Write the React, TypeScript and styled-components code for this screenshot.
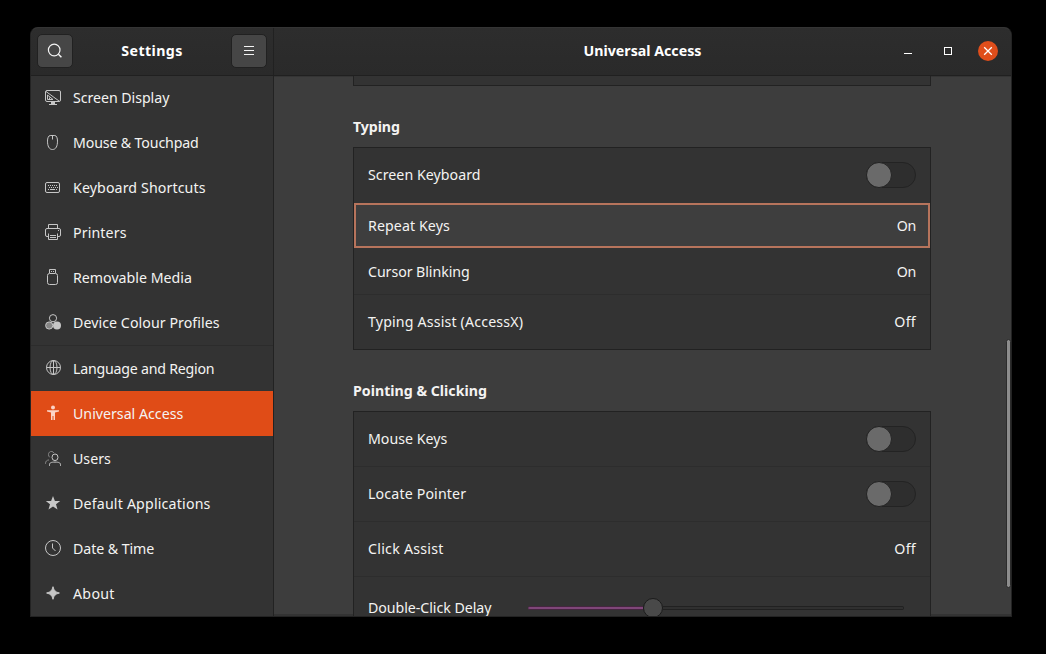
import React from "react";
import styled, { createGlobalStyle, css } from "styled-components";

const GlobalStyle = createGlobalStyle`
  html, body { margin: 0; background: #000; }
  *, *::before { box-sizing: border-box; }
  body {
    height: 654px;
    overflow: hidden;
    font-family: "Noto Sans", "Open Sans", sans-serif;
    font-size: 14.2px;
    line-height: 20px;
    color: #f4f3f2;
  }
`;

const Desktop = styled.div`
  height: 654px;
  padding: 27px 34px 37px 30px;
  background: #000;
`;

const Window = styled.div`
  height: 590px;
  display: flex;
  flex-direction: column;
  border: 1px solid #232323;
  border-top-color: #343434;
  border-radius: 8px 8px 0 0;
  background: #3d3d3d;
  overflow: hidden;
`;

const Header = styled.header`
  height: 48px;
  flex: none;
  display: flex;
  background: linear-gradient(#2d2d2d, #2a2a2a);
  border-bottom: 1px solid #202020;
  position: relative;
  z-index: 1;
`;

const HeaderLeft = styled.div`
  width: 243px;
  display: flex;
  align-items: center;
  justify-content: space-between;
  padding: 0 6px 2px;
  border-right: 1px solid #212121;
`;

const HeaderRight = styled.div`
  flex: 1;
  display: grid;
  grid-template-columns: 1fr auto 1fr;
  align-items: center;
  padding: 0 13px 2px;
`;

const Title = styled.h1<{ $track?: number }>`
  margin: 0;
  font-size: 14.2px;
  line-height: 20px;
  font-weight: 700;
  letter-spacing: ${(p) => p.$track ?? 0}px;
  color: #fff;
`;

const ToolButton = styled.button`
  width: 36px;
  height: 34px;
  padding: 0;
  display: grid;
  place-items: center;
  border: 1px solid #212121;
  border-radius: 5px;
  background: #464646;
  color: #f4f4f4;
`;

const WindowControls = styled.div`
  grid-column: 3;
  justify-self: end;
  display: flex;
  gap: 20px;
`;

const Control = styled.span<{ $close?: boolean }>`
  width: 20px;
  height: 20px;
  border-radius: 50%;
  color: #fff;
  background: ${(p) => (p.$close ? "#e04e1b" : "transparent")};
  svg { display: block; }
`;

const Body = styled.div`
  flex: 1;
  min-height: 0;
  display: flex;
`;

const Sidebar = styled.nav`
  width: 243px;
  flex: none;
  margin-top: -1px;
  background: #333;
  border-right: 1px solid #222;
  overflow: hidden;
`;

const NavItem = styled.div<{ $active?: boolean; $track: number; $separated?: boolean }>`
  height: 45px;
  display: flex;
  align-items: center;
  gap: 12px;
  padding: 0 14px;
  letter-spacing: ${(p) => p.$track}px;
  white-space: nowrap;
  ${(p) =>
    p.$separated &&
    css`
      height: 46px;
      border-top: 1px solid #2c2c2c;
    `}
  ${(p) => p.$active && css`background: #e04c17;`}
  svg {
    flex: none;
    margin-bottom: 1px;
    overflow: visible;
    color: ${(p) => (p.$active ? "#fbd3c6" : "#c6c6c6")};
  }
`;

const Content = styled.main`
  flex: 1;
  min-width: 0;
  display: flex;
  overflow: hidden;
  box-shadow: inset 0 1px 0 #343434, inset 0 -2px 0 #333;
`;

const Scroller = styled.div`
  flex: 1;
  padding: 0 75px 0 79px;
`;

const Section = styled.section`
  height: 264px;
`;

const SectionTitle = styled.h2<{ $track: number }>`
  margin: 0;
  height: 61px;
  padding-top: 31px;
  font-size: 14.2px;
  line-height: 20px;
  font-weight: 700;
  letter-spacing: ${(p) => p.$track}px;
`;

const Panel = styled.div`
  border: 1px solid #222;
  background: #333;
`;

const PreviousPanel = styled(Panel)`
  height: 10px;
  border-top: 0;
`;

const Row = styled.div<{ $height: number; $focused?: boolean; $divided?: boolean }>`
  height: ${(p) => p.$height}px;
  display: flex;
  align-items: center;
  justify-content: space-between;
  padding: 0 14px;
  ${(p) => p.$divided && css`border-bottom: 1px solid #2d2d2d;`}
  ${(p) =>
    p.$focused &&
    css`
      background: #3e3e3e;
      border: 2px solid #b7745c;
      padding: 0 12px;
    `}
`;

const KeyboardRow = styled(Row)`
  padding-bottom: 1px;
`;

const CursorRow = styled(Row)`
  padding-top: 1px;
`;

const Label = styled.span<{ $track?: number }>`
  letter-spacing: ${(p) => p.$track ?? 0}px;
  white-space: nowrap;
`;

const Toggle = styled.span`
  width: 50px;
  height: 26px;
  display: flex;
  border: 1px solid #232323;
  border-radius: 13px;
  background: #2e2e2e;
  &::before {
    content: "";
    flex: none;
    width: 26px;
    height: 26px;
    margin: -1px 0 0 -1px;
    border: 1px solid #242424;
    border-radius: 50%;
    background: #6a6a6a;
  }
`;

const SliderTrack = styled.div`
  width: 376px;
  height: 20px;
  margin-right: 12px;
  display: flex;
  align-items: center;
`;

const SliderFill = styled.i`
  width: 115px;
  height: 4px;
  background: #7f4679;
  border: solid #44263f;
  border-width: 1px 0;
  border-radius: 2px 0 0 2px;
`;

const SliderThumb = styled.i`
  width: 20px;
  height: 20px;
  border: 1px solid #1b1b1b;
  border-radius: 50%;
  background: #494949;
`;

const SliderRest = styled.i`
  flex: 1;
  height: 4px;
  border: 1px solid #212121;
  border-left: 0;
  border-radius: 0 2px 2px 0;
  background: #303030;
`;

const ScrollRail = styled.div`
  width: 5px;
  flex: none;
  padding-top: 263px;
`;

const ScrollThumb = styled.div`
  width: 5px;
  height: 249px;
  border: 1px solid #2c2c2c;
  border-radius: 3px;
  background: #8d8d8d;
`;

const Icon = ({ children }: { children: React.ReactNode }) => (
  <svg width="16" height="16" viewBox="0 0 16 16" fill="none" stroke="currentColor">
    {children}
  </svg>
);

const icons = {
  display: (
    <Icon>
      <rect x=".5" y="1.5" width="15" height="11" rx="1.5" />
      <path d="M1 2.5 14 12M2.5 6v4.5H8zM4.5 8.5v2" />
      <path d="M6 13h4v2h2v1H4v-1h2z" fill="currentColor" stroke="none" />
    </Icon>
  ),
  mouse: (
    <Icon>
      <path d="M5.200 1.500h4.600c1.800 0 2.700 2.800 2.700 5.600 0 4.900-1.500 8.400-5 8.400s-5-3.500-5-8.400C2.500 4.300 3.400 1.500 5.200 1.500zM7.500 1.500v4" />
    </Icon>
  ),
  keyboard: (
    <Icon>
      <rect x=".5" y="3.5" width="14" height="10" rx="1.5" />
      <path d="M3 6.500h10M4 8.500h9" strokeDasharray="1 1" />
      <path d="M3 10.500h1M5 10.500h5M11 10.500h1" />
    </Icon>
  ),
  printer: (
    <Icon>
      <path d="M3.5 4V.5h9V4M3 12.5H2A1.5 1.5 0 0 1 .5 11V6A1.5 1.5 0 0 1 2 4.5h12A1.5 1.5 0 0 1 15.5 6v5a1.5 1.5 0 0 1-1.5 1.5h-1M3.5 9.500v6h9v-6M5 11.500h6M5 13.500h6M13 6.500h1" />
    </Icon>
  ),
  usb: (
    <Icon>
      <path d="M4.5 4V.5h6V4M6 2.5h1M8 2.5h1" />
      <rect x="2.5" y="4.5" width="10" height="11" rx="2" />
    </Icon>
  ),
  colour: (
    <Icon>
      <circle cx="8" cy="4.2" r="3.6" />
      <circle cx="4.200" cy="11.500" r="3.6" fill="#858585" />
      <circle cx="12" cy="11.500" r="4" fill="currentColor" stroke="none" />
    </Icon>
  ),
  globe: (
    <Icon>
      <circle cx="8.5" cy="7.5" r="7" />
      <ellipse cx="8.5" cy="7.5" rx="3.5" ry="7" />
      <path d="M8.5.5v14M1.5 7.5h14" />
    </Icon>
  ),
  access: (
    <Icon>
      <g fill="currentColor" stroke="none">
        <circle cx="8" cy="2.600" r="2" />
        <path d="M2 5.300h12v1.200l-4 .9V15H8.500v-4h-1v4H6V7.400l-4-.9z" />
      </g>
    </Icon>
  ),
  users: (
    <Icon>
      <g transform="translate(0 .8)">
        <path d="M9 2.200C8 .5 5.800.2 4.500 1.300 3 2.500 3.200 5.200 4.700 6.500M.5 13c0-2.600 1.200-3.600 3.500-3.900" stroke="#858585" />
        <ellipse cx="10" cy="6.500" rx="3" ry="3.300" />
        <path d="M4.500 15v-1c0-2.100 1.600-2.700 5.500-2.700s5.500.6 5.500 2.700v1" />
      </g>
    </Icon>
  ),
  star: (
    <Icon>
      <path d="m8 1 1.900 5h5.300l-4.200 3.300 1.500 5.200L8 11.400l-4.500 3.100L5 9.300.8 6h5.300z" fill="currentColor" stroke="none" />
    </Icon>
  ),
  clock: (
    <Icon>
      <circle cx="8" cy="8" r="7.500" />
      <path d="M7.500 3.500V8l3 3" />
    </Icon>
  ),
  about: (
    <Icon>
      <path d="M8 1.700c1 4 2.300 5.300 6.400 6.300C10.300 9 9 10.300 8 14.300 7 10.300 5.700 9 1.600 8 5.700 7 7 5.700 8 1.700z" fill="currentColor" />
    </Icon>
  ),
};

type Item = { label: string; icon: keyof typeof icons; track: number; active?: boolean; separated?: boolean };

const items: Item[] = [
  { label: "Screen Display", icon: "display", track: -0.05 },
  { label: "Mouse & Touchpad", icon: "mouse", track: -0.15 },
  { label: "Keyboard Shortcuts", icon: "keyboard", track: 0.11 },
  { label: "Printers", icon: "printer", track: 0.12 },
  { label: "Removable Media", icon: "usb", track: 0 },
  { label: "Device Colour Profiles", icon: "colour", track: 0.06 },
  { label: "Language and Region", icon: "globe", track: -0.23, separated: true },
  { label: "Universal Access", icon: "access", track: 0, active: true },
  { label: "Users", icon: "users", track: 0 },
  { label: "Default Applications", icon: "star", track: 0.18 },
  { label: "Date & Time", icon: "clock", track: -0.08 },
  { label: "About", icon: "about", track: 0.3 },
];

export default function App() {
  return (
    <>
      <GlobalStyle />
      <Desktop>
        <Window>
          <Header>
            <HeaderLeft>
              <ToolButton aria-label="Search">
                <Icon>
                  <circle cx="7.2" cy="7" r="5.8" strokeWidth="1.2" />
                  <path d="m11.4 11.2 3 3" strokeWidth="1.5" />
                </Icon>
              </ToolButton>
              <Title $track={0.4}>Settings</Title>
              <ToolButton aria-label="Menu">
                <Icon>
                  <path d="M3 3.5h10M3 7.5h10M3 11.5h10" />
                </Icon>
              </ToolButton>
            </HeaderLeft>
            <HeaderRight>
              <span />
              <Title>Universal Access</Title>
              <WindowControls>
                <Control>
                  <svg width="20" height="20"><path d="M6 12.5h8" stroke="currentColor" /></svg>
                </Control>
                <Control>
                  <svg width="20" height="20"><rect x="6.5" y="6.5" width="7" height="7" fill="none" stroke="currentColor" /></svg>
                </Control>
                <Control $close>
                  <svg width="20" height="20"><path d="m6.2 6.2 7.6 7.6M13.8 6.2l-7.600 7.600" stroke="currentColor" strokeWidth="1.3" /></svg>
                </Control>
              </WindowControls>
            </HeaderRight>
          </Header>
          <Body>
            <Sidebar>
              {items.map((i) => (
                <NavItem key={i.label} $active={i.active} $separated={i.separated} $track={i.track}>
                  {icons[i.icon]}
                  {i.label}
                </NavItem>
              ))}
            </Sidebar>
            <Content>
              <Scroller>
                <PreviousPanel />
                <Section>
                  <SectionTitle $track={-0.1}>Typing</SectionTitle>
                  <Panel>
                    <KeyboardRow $height={55}><Label $track={0.04}>Screen Keyboard</Label><Toggle /></KeyboardRow>
                    <Row $height={45} $focused><Label $track={0.09}>Repeat Keys</Label><Label $track={-0.3}>On</Label></Row>
                    <CursorRow $height={47} $divided><Label $track={-0.06}>Cursor Blinking</Label><Label $track={-0.3}>On</Label></CursorRow>
                    <Row $height={54}><Label $track={0.16}>Typing Assist (AccessX)</Label><Label $track={0.3}>Off</Label></Row>
                  </Panel>
                </Section>
                <Section>
                  <SectionTitle $track={0}>Pointing &amp; Clicking</SectionTitle>
                  <Panel>
                    <Row $height={55} $divided><Label>Mouse Keys</Label><Toggle /></Row>
                    <Row $height={55} $divided><Label $track={0.15}>Locate Pointer</Label><Toggle /></Row>
                    <Row $height={55} $divided><Label $track={0.26}>Click Assist</Label><Label $track={0.3}>Off</Label></Row>
                    <Row $height={62}>
                      <Label $track={-0.05}>Double-Click Delay</Label>
                      <SliderTrack><SliderFill /><SliderThumb /><SliderRest /></SliderTrack>
                    </Row>
                  </Panel>
                </Section>
              </Scroller>
              <ScrollRail><ScrollThumb /></ScrollRail>
            </Content>
          </Body>
        </Window>
      </Desktop>
    </>
  );
}
